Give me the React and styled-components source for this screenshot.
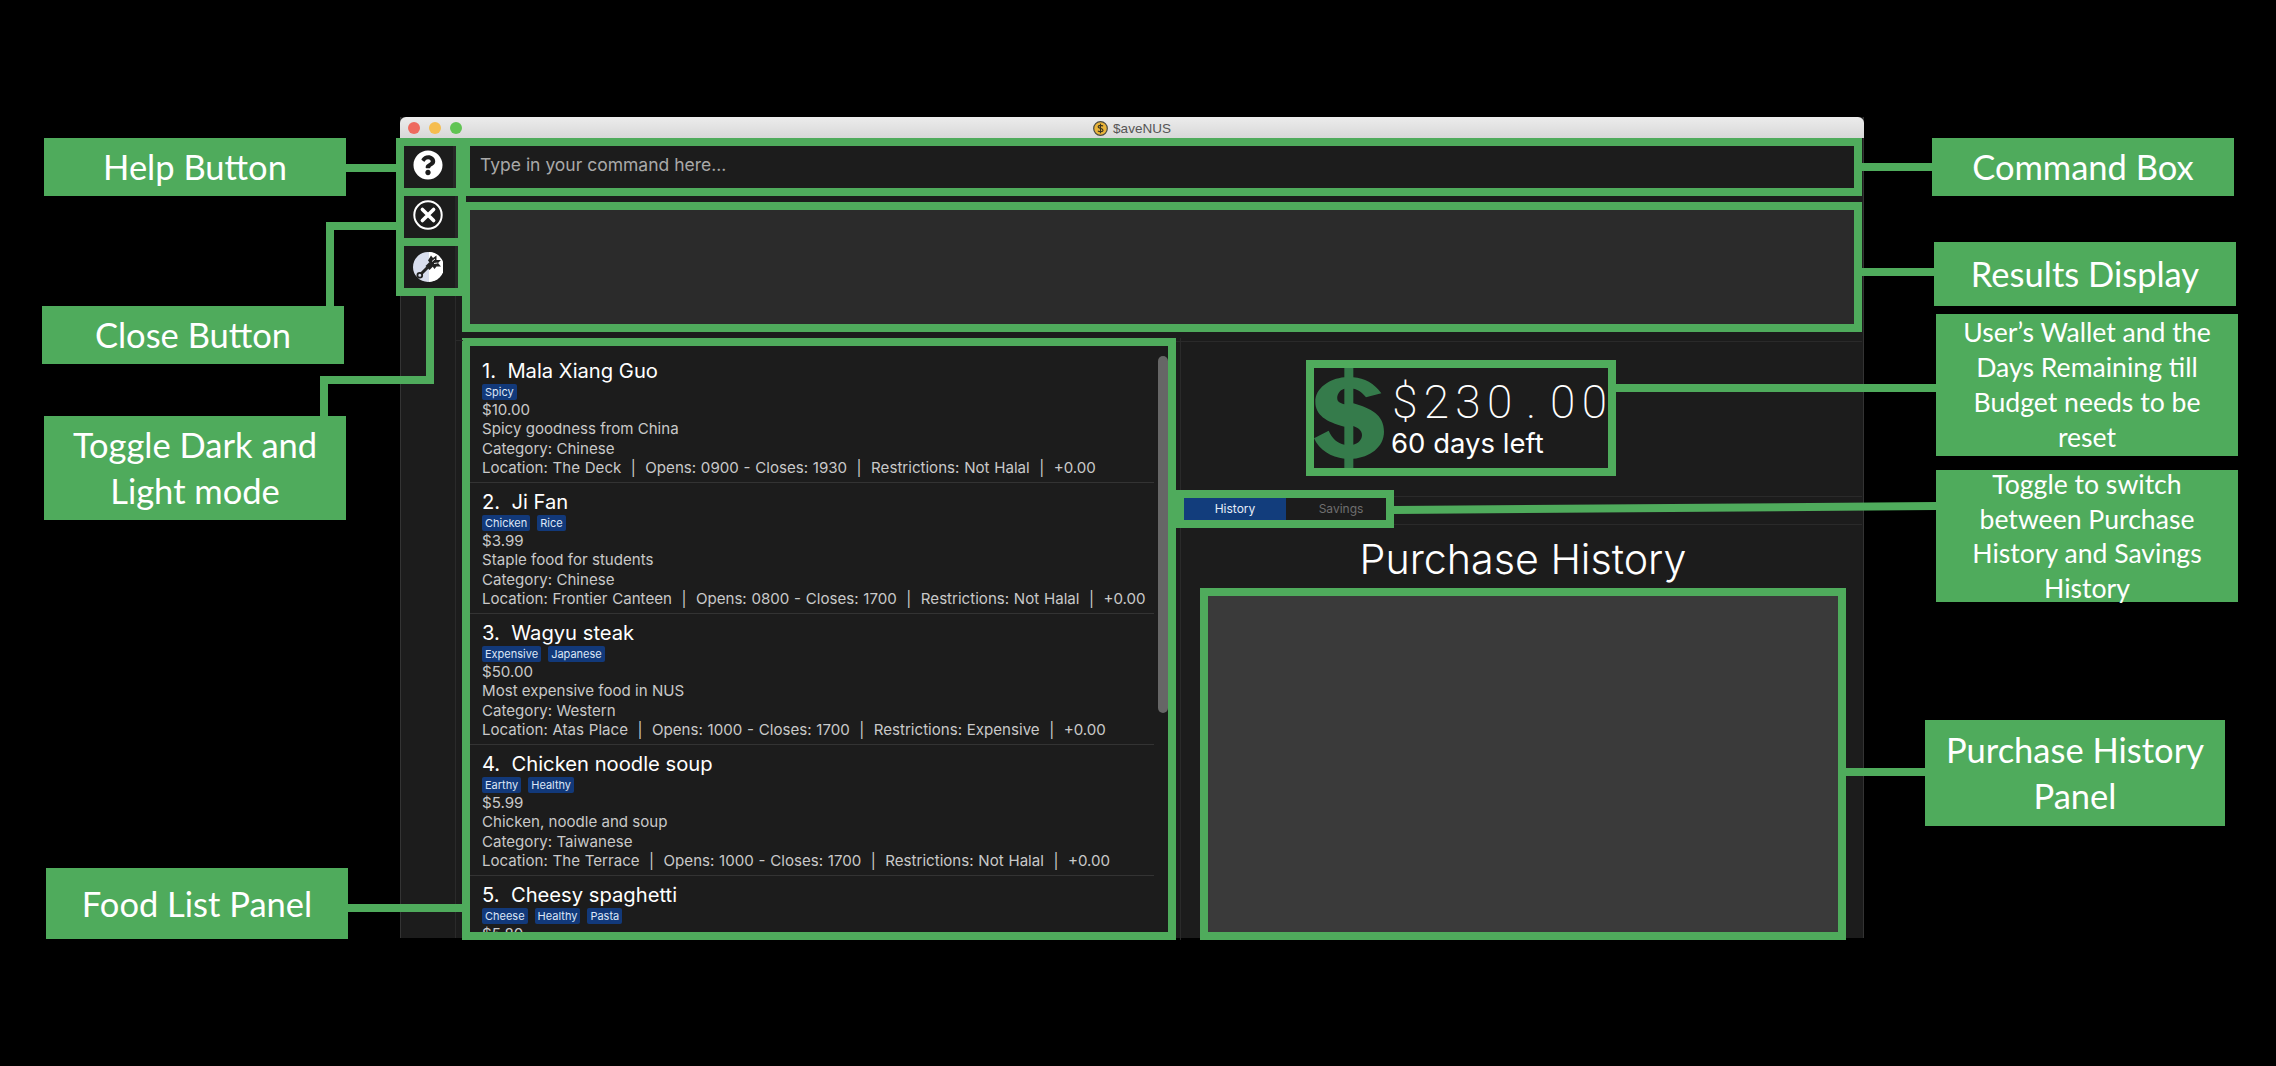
import React from 'react'
import styled, { createGlobalStyle } from 'styled-components'
import { FaQuestionCircle } from 'react-icons/fa'

const GREEN = '#4fab5c'
const UI_FONT = '"Inter", "Liberation Sans", sans-serif'

const foods = [
  {
    name: 'Mala Xiang Guo',
    tags: ['Spicy'],
    price: '$10.00',
    desc: 'Spicy goodness from China',
    category: 'Chinese',
    location: 'The Deck',
    hours: 'Opens: 0900 - Closes: 1930',
    restriction: 'Not Halal',
  },
  {
    name: 'Ji Fan',
    tags: ['Chicken', 'Rice'],
    price: '$3.99',
    desc: 'Staple food for students',
    category: 'Chinese',
    location: 'Frontier Canteen',
    hours: 'Opens: 0800 - Closes: 1700',
    restriction: 'Not Halal',
  },
  {
    name: 'Wagyu steak',
    tags: ['Expensive', 'Japanese'],
    price: '$50.00',
    desc: 'Most expensive food in NUS',
    category: 'Western',
    location: 'Atas Place',
    hours: 'Opens: 1000 - Closes: 1700',
    restriction: 'Expensive',
  },
  {
    name: 'Chicken noodle soup',
    tags: ['Earthy', 'Healthy'],
    price: '$5.99',
    desc: 'Chicken, noodle and soup',
    category: 'Taiwanese',
    location: 'The Terrace',
    hours: 'Opens: 1000 - Closes: 1700',
    restriction: 'Not Halal',
  },
  {
    // only the top of this card is on screen, the list is scrolled to the top
    name: 'Cheesy spaghetti',
    tags: ['Cheese', 'Healthy', 'Pasta'],
    price: '$5.80',
  },
]

// callouts around the window
const callouts = [
  { x: 44, y: 138, w: 302, h: 58, size: 34.5, lines: ['Help Button'] },
  { x: 42, y: 306, w: 302, h: 58, size: 34.5, lines: ['Close Button'] },
  { x: 44, y: 416, w: 302, h: 104, size: 34.5, lh: 46, lines: ['Toggle Dark and', 'Light mode'] },
  { x: 46, y: 868, w: 302, h: 71, size: 34.5, lines: ['Food List Panel'] },
  { x: 1932, y: 138, w: 302, h: 58, size: 34.5, lines: ['Command Box'] },
  { x: 1934, y: 242, w: 302, h: 64, size: 34.5, lines: ['Results Display'] },
  {
    x: 1936, y: 314, w: 302, h: 142, size: 26.6, lh: 35,
    lines: ['User’s Wallet and the', 'Days Remaining till', 'Budget needs to be', 'reset'],
  },
  {
    x: 1936, y: 470, w: 302, h: 132, size: 26.6, lh: 28, gap: 6.6,
    lines: ['Toggle to switch', 'between Purchase', 'History and Savings', 'History'],
  },
  { x: 1925, y: 720, w: 300, h: 106, size: 34.5, lh: 46, lines: ['Purchase History', 'Panel'] },
]

const wires = [
  { x: 346, y: 164, w: 50, h: 8 },
  { x: 326, y: 222, w: 70, h: 8 },
  { x: 326, y: 222, w: 8, h: 84 },
  { x: 426, y: 295, w: 8, h: 89 },
  { x: 320, y: 376, w: 114, h: 8 },
  { x: 320, y: 376, w: 8, h: 40 },
  { x: 348, y: 904, w: 114, h: 8 },
  { x: 1862, y: 163, w: 70, h: 8 },
  { x: 1862, y: 268, w: 72, h: 8 },
  { x: 1616, y: 384, w: 320, h: 8 },
  { x: 1846, y: 768, w: 79, h: 8 },
]

const GlobalStyle = createGlobalStyle`
  html, body {
    margin: 0;
    padding: 0;
    background: #000;
  }
  * {
    box-sizing: border-box;
  }
`

const Page = styled.div`
  position: relative;
  width: 2276px;
  height: 1066px;
  padding: 117px 0 0 400px;
  background: #000;
  overflow: hidden;
  font-family: ${UI_FONT};
`

const Window = styled.div`
  position: relative;
  width: 1464px;
  height: 821px;
  background: #1c1c1c;
  box-shadow: inset 1px 0 #333, inset -1px 0 #333;

  /* gutter line under the buttons */
  &::before {
    content: '';
    position: absolute;
    left: 55px;
    top: 178px;
    bottom: 0;
    width: 1px;
    background: #2a2a2a;
  }

  &::after {
    content: '';
    position: absolute;
    left: 55px;
    top: 223px;
    width: 8px;
    height: 1px;
    background: #2a2a2a;
  }
`

const TitleBar = styled.div`
  position: relative;
  display: flex;
  align-items: center;
  justify-content: center;
  gap: 5px;
  height: 21px;
  padding-top: 2px;
  background: linear-gradient(#ececec, #d8d8d8);
  border-radius: 6px 6px 0 0;
  color: #555;
  font-size: 13.5px;
  font-family: "Liberation Sans", sans-serif;
`

const Lights = styled.div`
  position: absolute;
  left: 8px;
  top: 5px;
  display: flex;
  gap: 9px;
`

const Light = styled.span`
  width: 12px;
  height: 12px;
  border-radius: 50%;
  background: ${p => p.$color};
`

const Body = styled.div`
  display: grid;
  grid-template-columns: 66px 1400px;
  margin-left: -4px;
`

const Rail = styled.div`
  position: relative;
  display: flex;
  flex-direction: column;
  gap: 8px;
  width: 70px;
  height: 158px;
  border: 8px solid ${GREEN};
  background: ${GREEN};
`

const RailButton = styled.div`
  display: flex;
  align-items: center;
  justify-content: flex-start;
  padding: 0 0 ${p => (p.$lift ? '4px' : '0')} 9px;
  width: ${p => (p.$narrow ? '52px' : '54px')};
  height: 42px;
  background: #1c1c1c;
  border-right: 3px solid #262626;
`

const Main = styled.div`
  display: flex;
  flex-direction: column;
  gap: 6px;
`

const CommandBox = styled.div`
  display: flex;
  align-items: center;
  height: 58px;
  padding: 0 0 5px 10px;
  border: 8px solid ${GREEN};
  background: #1c1c1c;
  color: #a9a9a9;
  font-size: 17.5px;
`

const ResultsBox = styled.div`
  height: 130px;
  border: 8px solid ${GREEN};
  background: #2b2b2b;
`

const Lower = styled.div`
  display: flex;
  height: 602px;
`

const FoodFrame = styled.div`
  position: relative;
  flex: none;
  width: 714px;
  height: 602px;
  border: 8px solid ${GREEN};
  padding-top: 6px;
  background: #1c1c1c;
  overflow: hidden;
`

const ScrollThumb = styled.div`
  position: absolute;
  right: 0;
  top: 10px;
  width: 10px;
  height: 357px;
  border-radius: 5px;
  background: #666;
`

const FoodCard = styled.div`
  width: 684px;
  height: 131px;
  padding: 6px 0 0 12px;
  border-bottom: 1px solid #333;
  color: #c9c9c9;
  font-size: 15.1px;
  line-height: 19.3px;
`

const FoodName = styled.div`
  height: 26px;
  color: #fff;
  font-size: 20.2px;
  line-height: 26px;
  white-space: pre;
`

const TagRow = styled.div`
  display: flex;
  gap: 7px;
`

const Tag = styled.span`
  height: 16px;
  padding: 0 3px;
  border-radius: 2px;
  background: #12397a;
  color: #dce6f7;
  font-size: 11px;
  line-height: 16px;
`

const InfoLine = styled.div`
  white-space: pre;
`

const LocationLine = styled(InfoLine)`
  word-spacing: 0.5px;
`

const RightPanel = styled.div`
  flex: 1;
  padding-top: 22px;
  background:
    linear-gradient(#2a2a2a, #2a2a2a) 0 3px / 100% 1px no-repeat,
    linear-gradient(#2a2a2a, #2a2a2a) 4px 0 / 1px 100% no-repeat;
`

const WalletFrame = styled.div`
  display: flex;
  width: 310px;
  height: 116px;
  margin-left: 130px;
  border: 8px solid ${GREEN};
  background: #1c1c1c;
`

const DollarIcon = styled.svg`
  flex: none;
  width: 70px;
  height: 100px;
`

const WalletText = styled.div`
  padding: 8px 0 0 5px;
`

const Amount = styled.div`
  display: flex;
  height: 51px;
  color: #fff;
  font-family: "Roboto", sans-serif;
  font-weight: 200;
  font-size: 46px;
  line-height: 52px;
`

const AmountChar = styled.span`
  width: 31.6px;
  text-align: center;
`

const DaysLeft = styled.div`
  padding-left: 2px;
  color: #fff;
  font-size: 27.5px;
  line-height: 32px;
`

const TabRow = styled.div`
  height: 38px;
  margin-top: 14px;
  background:
    linear-gradient(#2a2a2a, #2a2a2a) 0 6px / 100% 1px no-repeat,
    linear-gradient(#2a2a2a, #2a2a2a) 0 34px / 100% 1px no-repeat;
`

const TabFrame = styled.div`
  display: flex;
  width: 218px;
  height: 38px;
  border: 8px solid ${GREEN};
  background: #1c1c1c;
`

const Tab = styled.div`
  flex: none;
  width: ${p => (p.$active ? '102px' : '100px')};
  padding-left: ${p => (p.$active ? '0' : '10px')};
  background: ${p => (p.$active ? '#123d7c' : 'transparent')};
  color: ${p => (p.$active ? '#e6edf8' : '#6f6f6f')};
  font-size: 12px;
  line-height: 22px;
  text-align: center;
`

const PanelHeading = styled.div`
  width: 646px;
  height: 60px;
  margin-left: 24px;
  color: #fff;
  font-size: 41.2px;
  font-weight: 300;
  line-height: 62px;
  text-align: center;
`

const HistoryFrame = styled.div`
  width: 646px;
  height: 352px;
  margin-left: 24px;
  border: 8px solid ${GREEN};
  background: #3a3a3a;
`

const Overlay = styled.div`
  position: absolute;
  inset: 0;
  pointer-events: none;
`

const Wire = styled.div`
  position: absolute;
  left: ${p => p.$x}px;
  top: ${p => p.$y}px;
  width: ${p => p.$w}px;
  height: ${p => p.$h}px;
  background: ${GREEN};
`

const Callout = styled.div`
  position: absolute;
  left: ${p => p.$x}px;
  top: ${p => p.$y}px;
  width: ${p => p.$w}px;
  height: ${p => p.$h}px;
  display: flex;
  flex-direction: column;
  align-items: center;
  justify-content: center;
  gap: ${p => p.$gap || 0}px;
  background: ${GREEN};
  color: #fff;
  font-family: "Lato", sans-serif;
  font-size: ${p => p.$size}px;
  line-height: ${p => p.$lh || p.$h}px;
  white-space: nowrap;
`

const TiltedWire = styled.svg`
  position: absolute;
  left: 0;
  top: 0;
`

const CloseIcon = () => (
  <svg width="30" height="30" viewBox="0 0 30 30">
    <circle cx="15" cy="15" r="13.7" fill="none" stroke="#fff" strokeWidth="2" />
    <path d="M9.4 9.4 L20.6 20.6 M20.6 9.4 L9.4 20.6" stroke="#fff" strokeWidth="3.6" strokeLinecap="round" />
  </svg>
)

const ThemeIcon = () => (
  <svg width="30" height="30" viewBox="0 0 30 30">
    <circle cx="15" cy="15" r="15" fill="#d9deee" />
    <path d="M16 0 A15 15 0 0 1 16 30 Z" fill="#fff" />
    <path d="M8 22 L14.5 15.5" stroke="#222" strokeWidth="3" />
    <circle cx="6.8" cy="23.2" r="2.4" fill="#d9deee" stroke="#222" strokeWidth="1.8" />
    <path d="M12.5 14 L16.5 10 L20.5 14 L16.5 18 Z" fill="#222" />
    <path d="M15 8.5 L18 3.5 L20 6 L23.5 3.5 L23.5 8 L28 8 L25 11 L28 14.5 L23.5 14.5 L21.5 17 Z" fill="#222" />
    <path d="M19 9.5 L22 7 M21 11.5 L24.5 11" stroke="#fff" strokeWidth="0.9" />
  </svg>
)

const CoinIcon = () => (
  <svg width="15" height="15" viewBox="0 0 15 15">
    <circle cx="7.5" cy="7.5" r="6.8" fill="#e9b43a" stroke="#4a4a40" strokeWidth="1.2" />
    <path
      d="M10 5.2 C9.4 4.2 5.2 3.8 5.1 5.8 C5 7.8 10 7 10 9.2 C10 11.2 5.6 10.9 4.9 9.7 M7.5 2.8 V12.2"
      fill="none"
      stroke="#3a3520"
      strokeWidth="1.1"
    />
  </svg>
)

const FoodItem = ({ index, food }) => (
  <FoodCard>
    <FoodName>{`${index}.  ${food.name}`}</FoodName>
    <TagRow>
      {food.tags.map(tag => (
        <Tag key={tag}>{tag}</Tag>
      ))}
    </TagRow>
    <InfoLine>{food.price}</InfoLine>
    {food.desc && (
      <>
        <InfoLine>{food.desc}</InfoLine>
        <InfoLine>{`Category: ${food.category}`}</InfoLine>
        <LocationLine>
          {`Location: ${food.location}  |  ${food.hours}  |  Restrictions: ${food.restriction}  |  +0.00`}
        </LocationLine>
      </>
    )}
  </FoodCard>
)

const App = () => {
  return (
    <Page>
      <GlobalStyle />
      <Window>
        <TitleBar>
          <Lights>
            <Light $color="#ee6a5f" />
            <Light $color="#f5bd4f" />
            <Light $color="#61c454" />
          </Lights>
          <CoinIcon />
          <span>$aveNUS</span>
        </TitleBar>
        <Body>
          <Rail>
            <RailButton $narrow $lift>
              <FaQuestionCircle size={30} color="#fff" />
            </RailButton>
            <RailButton $lift>
              <CloseIcon />
            </RailButton>
            <RailButton>
              <ThemeIcon />
            </RailButton>
          </Rail>
          <Main>
            <CommandBox>Type in your command here...</CommandBox>
            <ResultsBox />
            <Lower>
              <FoodFrame>
                {foods.map((food, i) => (
                  <FoodItem key={food.name} index={i + 1} food={food} />
                ))}
                <ScrollThumb />
              </FoodFrame>
              <RightPanel>
                <WalletFrame>
                  <DollarIcon viewBox="24 24 210 300">
                    <path
                      fill="#357b4b"
                      fillRule="evenodd"
                      d="M115 24 H142 V52 C175 54 205 70 226 100 L180 112 C170 98 155 88 142 86 V130 C195 145 234 165 234 215 C234 262 190 292 142 296 V324 H115 V296 C75 292 40 270 24 235 L68 212 C78 235 95 250 115 254 V200 C60 185 28 165 28 125 C28 85 70 56 115 52 Z M115 86 C100 90 92 105 94 118 C96 128 105 130 115 133 Z M142 198 V254 C158 250 168 238 168 225 C168 210 155 203 142 198 Z"
                    />
                  </DollarIcon>
                  <WalletText>
                    <Amount>
                      {'$230.00'.split('').map((c, i) => (
                        <AmountChar key={i}>{c}</AmountChar>
                      ))}
                    </Amount>
                    <DaysLeft>60 days left</DaysLeft>
                  </WalletText>
                </WalletFrame>
                <TabRow>
                  <TabFrame>
                    <Tab $active>History</Tab>
                    <Tab>Savings</Tab>
                  </TabFrame>
                </TabRow>
                <PanelHeading>Purchase History</PanelHeading>
                <HistoryFrame />
              </RightPanel>
            </Lower>
          </Main>
        </Body>
      </Window>
      <Overlay>
        {wires.map(w => (
          <Wire key={`${w.x}-${w.y}-${w.w}`} $x={w.x} $y={w.y} $w={w.w} $h={w.h} />
        ))}
        <TiltedWire width="2276" height="1066">
          <polygon points="1394,506 1936,502 1936,510 1394,514" fill={GREEN} />
        </TiltedWire>
        {callouts.map(c => (
          <Callout key={c.lines[0]} $x={c.x} $y={c.y} $w={c.w} $h={c.h} $size={c.size} $lh={c.lh} $gap={c.gap}>
            {c.lines.map(line => (
              <span key={line}>{line}</span>
            ))}
          </Callout>
        ))}
      </Overlay>
    </Page>
  )
}

export default App
